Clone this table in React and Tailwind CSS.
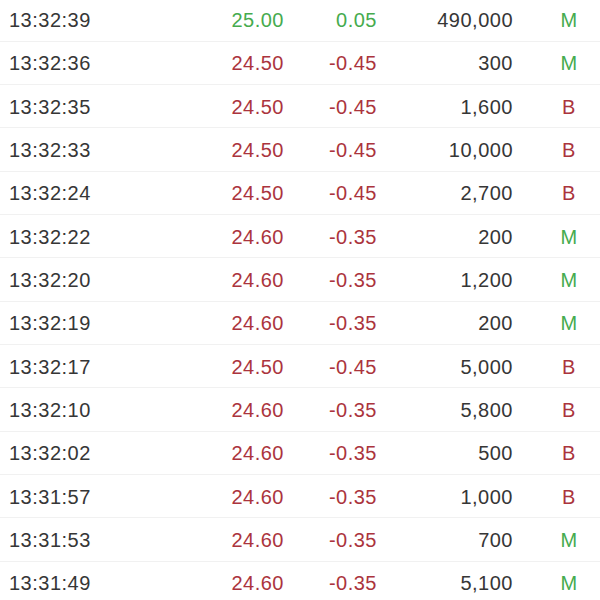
import React from "react";

const rows = [
  ["13:32:39", "25.00", "0.05", "490,000", "M", true],
  ["13:32:36", "24.50", "-0.45", "300", "M", false],
  ["13:32:35", "24.50", "-0.45", "1,600", "B", false],
  ["13:32:33", "24.50", "-0.45", "10,000", "B", false],
  ["13:32:24", "24.50", "-0.45", "2,700", "B", false],
  ["13:32:22", "24.60", "-0.35", "200", "M", false],
  ["13:32:20", "24.60", "-0.35", "1,200", "M", false],
  ["13:32:19", "24.60", "-0.35", "200", "M", false],
  ["13:32:17", "24.50", "-0.45", "5,000", "B", false],
  ["13:32:10", "24.60", "-0.35", "5,800", "B", false],
  ["13:32:02", "24.60", "-0.35", "500", "B", false],
  ["13:31:57", "24.60", "-0.35", "1,000", "B", false],
  ["13:31:53", "24.60", "-0.35", "700", "M", false],
  ["13:31:49", "24.60", "-0.35", "5,100", "M", false],
];

export default function App() {
  return (
    <div className="w-[600px] h-[600px] overflow-hidden bg-white font-['Liberation_Sans',Arial,sans-serif] text-[20px] tracking-[0.5px]">
      <div className="-mt-[1.5px]">
        {rows.map(([t, p, c, v, s, up]) => (
          <div
            key={t}
            className="flex items-center h-[43.33px] border-b border-[#f1f1f1] pt-[1px]"
          >
            <div className="w-[180px] pl-[9px] text-[#363636]">{t}</div>
            <div
              className={
                "w-[104px] text-right " +
                (up ? "text-[#46ab4e]" : "text-[#ab343d]")
              }
            >
              {p}
            </div>
            <div
              className={
                "w-[93px] text-right " +
                (up ? "text-[#46ab4e]" : "text-[#ab343d]")
              }
            >
              {c}
            </div>
            <div className="w-[136px] text-right text-[#363636]">{v}</div>
            <div
              className={
                "w-[87px] pl-[25px] text-center " +
                (s === "M" ? "text-[#46ab4e]" : "text-[#ab343d]")
              }
            >
              {s}
            </div>
          </div>
        ))}
      </div>
    </div>
  );
}
